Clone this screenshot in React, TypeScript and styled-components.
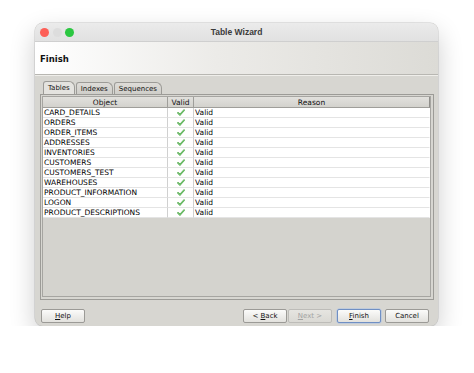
import React from 'react'
import styled, { createGlobalStyle } from 'styled-components'

const rows = [
  'CARD_DETAILS',
  'ORDERS',
  'ORDER_ITEMS',
  'ADDRESSES',
  'INVENTORIES',
  'CUSTOMERS',
  'CUSTOMERS_TEST',
  'WAREHOUSES',
  'PRODUCT_INFORMATION',
  'LOGON',
  'PRODUCT_DESCRIPTIONS',
]

const Check = () => (
  <svg width="8" height="7" viewBox="0 0 8 7">
    <path d="M1 3.8 L3 5.8 L7 1.2" fill="none" stroke="#4aa548" strokeWidth="1.7" strokeLinecap="round" strokeLinejoin="round" />
    <path d="M1 3.8 L3 5.8 L7 1.2" fill="none" stroke="#a6e39a" strokeWidth="0.6" strokeLinecap="round" strokeLinejoin="round" />
  </svg>
)

const App = () => {
  return (
    <>
      <Global />
      <Window>
        <TitleBar>
          <Lights>
            <Light color="#fd5f57" />
            <Light color="#dddddd" />
            <Light color="#2bc741" />
          </Lights>
          <Title>Table Wizard</Title>
        </TitleBar>
        <Header>Finish</Header>
        <Body>
          <Tabs>
            <Tab active>Tables</Tab>
            <Tab>Indexes</Tab>
            <Tab>Sequences</Tab>
          </Tabs>
          <Panel>
            <ScrollPane>
              <Grid>
                <HeadCell>Object</HeadCell>
                <HeadCell>Valid</HeadCell>
                <HeadCell last>Reason</HeadCell>
                {rows.map((r) => (
                  <React.Fragment key={r}>
                    <Cell>{r}</Cell>
                    <Cell center><Check /></Cell>
                    <Cell last>Valid</Cell>
                  </React.Fragment>
                ))}
              </Grid>
            </ScrollPane>
          </Panel>
        </Body>
        <Footer>
          <Button><Label><u>H</u>elp</Label></Button>
          <Spacer />
          <Button><Label>{'< '}<u>B</u>ack</Label></Button>
          <Button disabled><Label><u>N</u>ext {'>'}</Label></Button>
          <Button focused><Label><u>F</u>inish</Label></Button>
          <Button><Label>Cancel</Label></Button>
        </Footer>
      </Window>
    </>
  )
}

export default App

const Global = createGlobalStyle`
body {
  margin: 0;
  background: #ffffff;
  font-family: "DejaVu Sans", sans-serif;
}
`;

const Window = styled.div`
margin: 23px 0 0 35px;
width: 403px;
height: 303px;
border-radius: 8px;
overflow: hidden;
background: #d7d6d1;
box-shadow: 0 10px 26px rgba(0,0,0,0.2), 0 0 0 0.5px rgba(0,0,0,0.18);
display: flex;
flex-direction: column;
`;

const TitleBar = styled.div`
height: 19px;
flex-shrink: 0;
background: linear-gradient(#ebebeb, #e1e1e1);
border-bottom: 1px solid #cfcfcf;
display: flex;
align-items: center;
justify-content: center;
position: relative;
box-sizing: border-box;
`;

const Lights = styled.div`
position: absolute;
left: 5px;
top: 5px;
display: flex;
gap: 3.5px;
`;

const Light = styled.div<{ color: string }>`
width: 9px;
height: 9px;
border-radius: 50%;
background: ${(p) => p.color};
`;

const Title = styled.div`
font-family: "Liberation Sans", sans-serif;
font-weight: bold;
font-size: 8.5px;
color: #3a3a3a;
`;

const Header = styled.div`
height: 33px;
flex-shrink: 0;
box-sizing: border-box;
background: linear-gradient(90deg, #ffffff 0%, #ecebe8 45%, #dcdbd6 100%);
border-bottom: 1px solid #b8b7b2;
display: flex;
align-items: center;
padding: 1px 0 0 5px;
font-weight: bold;
font-size: 8.5px;
color: #111;
`;

const Body = styled.div`
display: flex;
flex-direction: column;
padding: 5px 4px 0 5px;
border-top: 1px solid #efeeea;
`;

const Tabs = styled.div`
display: flex;
padding-left: 3px;
height: 13px;
align-items: flex-end;
`;

const Tab = styled.div<{ active?: boolean }>`
height: ${(p) => (p.active ? '13px' : '12px')};
box-sizing: border-box;
padding: 0 4px 0 4px;
margin-right: 1px;
font-size: 7px;
color: #111;
display: flex;
align-items: center;
border: 1px solid #9c9b97;
border-bottom: none;
border-radius: 3px 6px 0 0;
background: ${(p) => (p.active ? '#e4e3df' : 'linear-gradient(#dedcd8, #cfcec9)')};
`;

const Panel = styled.div`
height: 206px;
box-sizing: border-box;
border: 1px solid #9c9b97;
background: #d7d6d1;
padding: 1px 2px 2px 1px;
display: flex;
`;

const ScrollPane = styled.div`
flex: 1;
border: 1px solid #a6a5a1;
background: #d4d3ce;
`;

const Grid = styled.div`
display: grid;
grid-template-columns: 125px 26px 1fr;
grid-auto-rows: 10px;
grid-template-rows: 11px;
`;

const HeadCell = styled.div<{ last?: boolean }>`
background: linear-gradient(#e2e1dd, #d3d2cd);
border-right: 1px solid ${(p) => (p.last ? '#8f8e8a' : '#9f9e9a')};
border-bottom: 1px solid #9f9e9a;
font-size: 7.5px;
color: #111;
display: flex;
align-items: center;
justify-content: center;
box-sizing: border-box;
`;

const Cell = styled.div<{ center?: boolean; last?: boolean }>`
background: #ffffff;
border-bottom: 1px solid #e4e4e4;
border-right: 1px solid ${(p) => (p.last ? '#ffffff' : '#d0d0d0')};
box-sizing: border-box;
font-size: 7.5px;
color: #000;
display: flex;
align-items: center;
justify-content: ${(p) => (p.center ? 'center' : 'flex-start')};
padding-left: ${(p) => (p.center ? '0' : '1px')};
white-space: nowrap;
overflow: hidden;
`;

const Footer = styled.div`
flex: 1;
display: flex;
align-items: flex-start;
padding: 9px 9px 0 6px;
gap: 1px;
`;

const Spacer = styled.div`
flex: 1;
`;

const Button = styled.button<{ focused?: boolean }>`
width: 44px;
height: 14px;
box-sizing: border-box;
margin-left: ${(p) => (p.focused ? '4px' : '0')};
margin-right: ${(p) => (p.focused ? '3px' : '0')};
padding: 0;
font-family: "DejaVu Sans", sans-serif;
font-size: 7px;
color: ${(p) => (p.disabled ? '#a3a3a3' : '#111')};
border: 1px solid ${(p) => (p.focused ? '#6f8fc4' : p.disabled ? '#bdbcb8' : '#9b9a96')};
box-shadow: ${(p) => (p.focused ? '0 0 0 0.5px #a9bfe3' : 'none')};
border-radius: 2px;
background: ${(p) => (p.disabled ? 'linear-gradient(#e6e5e1, #dad9d4)' : 'linear-gradient(#fbfbfa, #e2e1dd)')};
display: flex;
align-items: center;
justify-content: center;
`;

const Label = styled.span`
white-space: pre;
`;
